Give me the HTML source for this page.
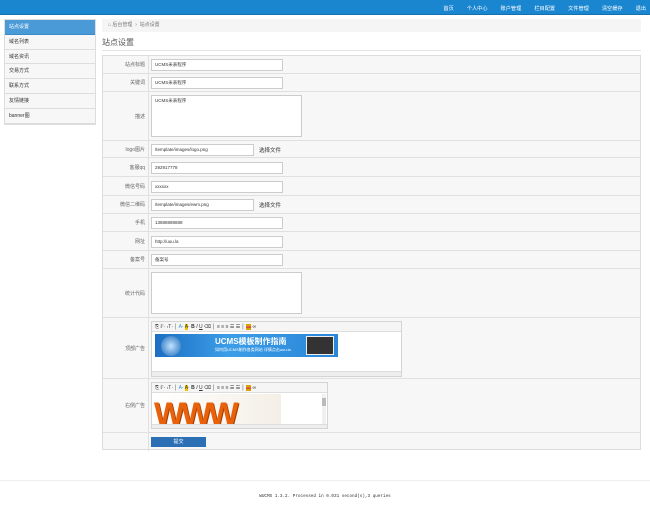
<!DOCTYPE html>
<html><head><meta charset="utf-8"><style>
*{margin:0;padding:0;box-sizing:border-box}
body{width:650px;height:512px;background:#fff;font-family:"Liberation Sans","Noto Sans CJK SC",sans-serif;font-size:5px;color:#333;position:relative;overflow:hidden}
.a{position:absolute}
.hdr{left:0;top:0;width:650px;height:15px;background:#1a86d0;border-bottom:1px solid #1570b0}
.nav{right:4px;top:5px;color:#fff;font-size:5.2px}
.nav span{margin-left:13px}
.side{left:4px;top:19px;width:92px;border:1px solid #ddd;background:#f7f7f7}
.side div{height:14.8px;line-height:14px;padding-left:4px;border-bottom:1px solid #ddd;font-size:5px;color:#333}
.side div.on{background:#4a9ad8;color:#fff;border-color:#3b8bc9}
.bc{left:102px;top:19px;width:539px;height:13px;background:#f5f5f5;line-height:13px;padding-left:6px;color:#777}
.tt{left:102px;top:37px;font-size:8px;color:#555}
.tl{left:102px;top:50px;width:539px;height:1px;background:#e5e5e5}
.tb{left:102px;top:55px;width:539px;height:395px;border:1px solid #ddd;background:#f7f7f7}
.row{position:absolute;left:0;width:537px;border-bottom:1px solid #e0e0e0}
.lb{position:absolute;left:0;top:0;width:46px;height:100%;border-right:1px solid #e0e0e0;text-align:right;padding-right:3px;color:#666;display:flex;align-items:center;justify-content:flex-end}
.in{position:absolute;left:48px;background:#fff;border:1px solid #ccc;height:12px;line-height:10px;padding-left:3px;font-size:4.5px;color:#333}
.btn{position:absolute;left:48px;background:#2b70b5;color:#fff;width:55px;height:10px;text-align:center;line-height:10px;font-size:5px}
.ed{position:absolute;background:#fff;border:1px solid #d4d4d4}
.tbar{height:10px;background:#f5f5f5;border-bottom:1px solid #ddd;font-size:5px;line-height:10px;padding-left:3px;color:#333;white-space:nowrap}
.foot{left:0;top:480px;width:650px;height:1px;background:#eee}
.ft{left:0;top:494px;width:650px;text-align:center;font-family:"Liberation Mono",monospace;font-size:4.3px;color:#333}
</style></head><body>
<div class="a hdr"></div>
<div class="a nav"><span>首页</span><span>个人中心</span><span>账户管理</span><span>栏目配置</span><span>文件管理</span><span>清空缓存</span><span>退出</span></div>
<div class="a side"><div class="on">站点设置</div><div>域名列表</div><div>域名资讯</div><div>交易方式</div><div>联系方式</div><div>友情链接</div><div>banner图</div></div>
<div class="a bc">⌂ 后台管理 &nbsp;›&nbsp; 站点设置</div>
<div class="a tt">站点设置</div>
<div class="a tl"></div>
<div class="a tb">
<div class="row" style="top:0;height:18px"><div class="lb">站点标题</div><div class="in" style="top:3px;width:132px">UCMS米表程序</div></div>
<div class="row" style="top:18px;height:18px"><div class="lb">关键词</div><div class="in" style="top:3px;width:132px">UCMS米表程序</div></div>
<div class="row" style="top:36px;height:49px"><div class="lb">描述</div><div class="in" style="top:3px;width:151px;height:42px">UCMS米表程序</div></div>
<div class="row" style="top:85px;height:17px"><div class="lb">logo图片</div><div class="in" style="top:3px;width:103px">/template/images/logo.png</div><div class="a" style="left:156px;top:5px;font-size:5.5px">选择文件</div></div>
<div class="row" style="top:102px;height:19px"><div class="lb">客服qq</div><div class="in" style="top:4px;width:132px">292917778</div></div>
<div class="row" style="top:121px;height:19px"><div class="lb">微信号码</div><div class="in" style="top:4px;width:132px">xxxxxx</div></div>
<div class="row" style="top:140px;height:18px"><div class="lb">微信二维码</div><div class="in" style="top:3px;width:103px">/template/images/ewm.png</div><div class="a" style="left:156px;top:5px;font-size:5.5px">选择文件</div></div>
<div class="row" style="top:158px;height:18px"><div class="lb">手机</div><div class="in" style="top:3px;width:132px">13888888888</div></div>
<div class="row" style="top:176px;height:19px"><div class="lb">网址</div><div class="in" style="top:4px;width:132px">http://uuu.la</div></div>
<div class="row" style="top:195px;height:18px"><div class="lb">备案号</div><div class="in" style="top:3px;width:132px">备案号</div></div>
<div class="row" style="top:213px;height:49px"><div class="lb">统计代码</div><div class="in" style="top:3px;width:151px;height:42px"></div></div>
<div class="row" style="top:262px;height:61px"><div class="lb">顶部广告</div>
<div class="ed" style="left:48px;top:3px;width:251px;height:56px"><div class="tbar">⎘ 𝔽· ₜT· │ <span style="color:#39c">A</span>· <span style="background:#f5c400">A</span>· <b>B</b> <i>I</i> <u>U</u> ⌫ │ ≡ ≡ ≡ ☰ ☰ │ <span style="background:#d9a400;color:#d44">▬</span> ∞</div>
<div style="margin:2px 0 0 3px;width:183px;height:23px;background:linear-gradient(90deg,#1b6ec2,#3c9de8 40%,#2a86d8);color:#fff;font-size:8px;font-weight:bold;padding:2px 0 0 60px;position:relative"><div style="position:absolute;left:6px;top:2px;width:20px;height:20px;border-radius:50%;background:radial-gradient(#bfe3ff,#1a66b8)"></div>UCMS模板制作指南<div style="font-size:4px;font-weight:normal">如何用UCMS制作各类网站 详情点击uuu.la</div><div style="position:absolute;right:4px;top:2px;width:28px;height:19px;background:#333;border:1px solid #eee"></div></div>
<div style="position:absolute;left:0;bottom:0;width:100%;height:5px;background:#eee;border-top:1px solid #ddd"></div></div></div>
<div class="row" style="top:323px;height:54px"><div class="lb">右侧广告</div>
<div class="ed" style="left:48px;top:3px;width:177px;height:47px"><div class="tbar">⎘ 𝔽· ₜT· │ <span style="color:#39c">A</span>· <span style="background:#f5c400">A</span>· <b>B</b> <i>I</i> <u>U</u> ⌫ │ ≡ ≡ ≡ ☰ ☰ │ <span style="background:#d9a400;color:#d44">▬</span> ∞</div>
<div style="margin:1px 0 0 2px;width:127px;height:30px;background:linear-gradient(90deg,#fff,#f4efe6);color:#e8620c;font-size:32px;font-weight:900;line-height:40px;overflow:hidden;letter-spacing:-3px;text-shadow:1px 1px 0 #a83c00">WWW</div>
<div style="position:absolute;right:1px;top:11px;width:4px;height:30px;background:#f0f0f0"><div style="margin-top:4px;height:8px;background:#bbb"></div></div>
<div style="position:absolute;left:0;bottom:0;width:100%;height:4px;background:#eee;border-top:1px solid #ddd"></div></div></div>
<div class="row" style="top:377px;height:18px;border:none"><div class="lb"></div><div class="btn" style="top:4px">提交</div></div>
</div>
<div class="a foot"></div>
<div class="a ft">WUCMS 1.3.2. Processed in 0.031 second(s),3 queries</div>
</body></html>
